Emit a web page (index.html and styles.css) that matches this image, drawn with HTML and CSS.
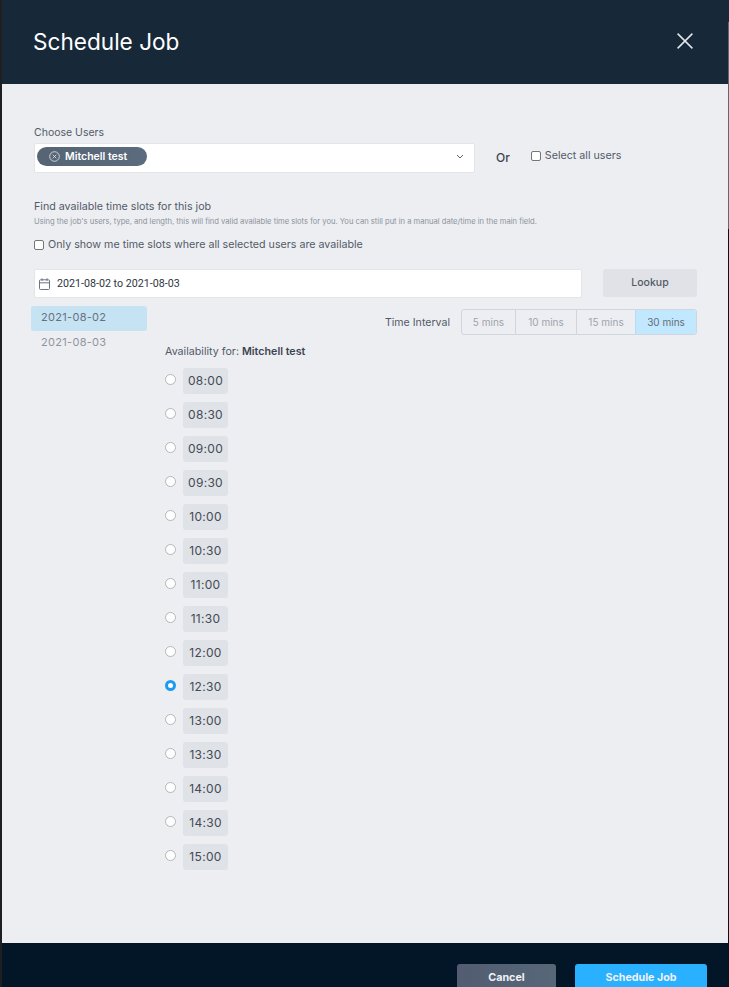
FILE: index.html
```html
<!DOCTYPE html>
<html lang="en">
<head>
<meta charset="utf-8">
<title>Schedule Job</title>
<link rel="stylesheet" href="styles.css">
</head>
<body>
<div class="modal">
  <header class="modal-head">
    <h1 class="modal-title">Schedule Job</h1>
    <svg class="close-icon" width="16" height="16" viewBox="0 0 16 16"><path d="M.6.6l14.8 14.8M15.4.6L.6 15.4" stroke="#e4e7ea" stroke-width="1.5" fill="none"/></svg>
  </header>
  <main class="modal-body">
    <div class="users-label">Choose Users</div>
    <div class="users-row">
      <div class="select">
        <span class="chip">
          <svg class="chip-icon" width="11" height="11" viewBox="0 0 11 11"><circle cx="5.5" cy="5.5" r="4.8" fill="none" stroke="#e8ebee" stroke-width=".8"/><path d="M3.7 3.7l3.6 3.6M7.3 3.7l-3.6 3.6" stroke="#e8ebee" stroke-width=".8"/></svg>
          <span>Mitchell test</span>
        </span>
        <svg class="chevron" width="8" height="5" viewBox="0 0 8 5"><path d="M1 1l3 3 3-3" stroke="#5b6470" stroke-width="1" fill="none"/></svg>
      </div>
      <span class="or">Or</span>
      <label class="check check-all"><span class="box"></span>Select all users</label>
    </div>
    <div class="find-title">Find available time slots for this job</div>
    <div class="find-hint">Using the job's users, type, and length, this will find valid available time slots for you. You can still put in a manual date/time in the main field.</div>
    <label class="check check-only"><span class="box"></span>Only show me time slots where all selected users are available</label>
    <div class="date-row">
      <div class="date-input">
        <svg class="cal-icon" width="11" height="12" viewBox="0 0 11 12"><rect x=".5" y="1.8" width="10" height="9.7" rx="1" fill="none" stroke="#6b7380"/><path d="M.5 4.8h10M3 .3v2.6M8 .3v2.6" stroke="#6b7380" fill="none"/></svg>
        <span>2021-08-02 to 2021-08-03</span>
      </div>
      <button class="lookup">Lookup</button>
    </div>
    <div class="results">
      <div class="dates">
        <div class="date-item date-active">2021-08-02</div>
        <div class="date-item">2021-08-03</div>
      </div>
      <div class="slots-pane">
        <div class="interval">
          <span class="interval-label">Time Interval</span>
          <div class="seg">
            <span class="seg-btn seg-5">5 mins</span>
            <span class="seg-btn seg-10">10 mins</span>
            <span class="seg-btn seg-15">15 mins</span>
            <span class="seg-btn seg-30 seg-on">30 mins</span>
          </div>
        </div>
        <div class="avail">Availability for: <b>Mitchell test</b></div>
        <div class="slots">
          <div class="slot"><span class="radio"></span><span class="time">08:00</span></div>
          <div class="slot"><span class="radio"></span><span class="time">08:30</span></div>
          <div class="slot"><span class="radio"></span><span class="time">09:00</span></div>
          <div class="slot"><span class="radio"></span><span class="time">09:30</span></div>
          <div class="slot"><span class="radio"></span><span class="time">10:00</span></div>
          <div class="slot"><span class="radio"></span><span class="time">10:30</span></div>
          <div class="slot"><span class="radio"></span><span class="time">11:00</span></div>
          <div class="slot"><span class="radio"></span><span class="time">11:30</span></div>
          <div class="slot"><span class="radio"></span><span class="time">12:00</span></div>
          <div class="slot"><span class="radio radio-on"></span><span class="time">12:30</span></div>
          <div class="slot"><span class="radio"></span><span class="time">13:00</span></div>
          <div class="slot"><span class="radio"></span><span class="time">13:30</span></div>
          <div class="slot"><span class="radio"></span><span class="time">14:00</span></div>
          <div class="slot"><span class="radio"></span><span class="time">14:30</span></div>
          <div class="slot"><span class="radio"></span><span class="time">15:00</span></div>
        </div>
      </div>
    </div>
  </main>
  <footer class="modal-foot">
    <button class="btn btn-cancel">Cancel</button>
    <button class="btn btn-primary">Schedule Job</button>
  </footer>
</div>
</body>
</html>
```

FILE: styles.css
```css
* { box-sizing: border-box; }
html, body { margin: 0; height: 987px; overflow: hidden; }
body { position: relative; background: #1d1f23; font-family: Inter, "Liberation Sans", sans-serif; color: #535a67; }
body::after { content: ""; position: absolute; top: 0; right: 0; width: 1px; height: 987px; background: linear-gradient(#172839 22px, #62686c 22px, #62686c 229px, #101114 229px); }
.modal { margin-left: 2px; width: 726px; height: 987px; display: flex; flex-direction: column; background: #eceef2; }
.modal-head { height: 84px; flex: none; background: #172839; display: flex; align-items: center; justify-content: space-between; padding: 0 35px 2px 31px; }
.modal-title { margin: 0; font-size: 22.6px; font-weight: 400; color: #fff; }
.close-icon { display: block; }
.modal-body { flex: 1; padding: 42px 31px 0 32px; min-height: 0; }
.users-label { font-size: 10.5px; line-height: 14px; }
.users-row { display: flex; align-items: center; margin-top: 3px; height: 30px; }
.select { width: 441px; height: 30px; flex: none; background: #fff; border: 1px solid #e3e5e9; border-radius: 2px; display: flex; align-items: center; justify-content: space-between; padding: 0 10px 3px 2px; }
.chip { width: 110px; height: 19px; border-radius: 10px; background: linear-gradient(90deg, #566474, #5b6c7e); color: #fff; font-size: 10.5px; font-weight: 600; display: flex; align-items: center; gap: 5px; padding: 0 0 1px 12px; }
.chip-icon, .chevron, .cal-icon { display: block; flex: none; }
.or { font-size: 12px; font-weight: 500; color: #3d4450; margin: -2px 0 0 21px; }
.check { display: flex; align-items: center; gap: 4px; font-size: 10.7px; }
.check-all { margin-left: 21px; margin-top: -5px; }
.box { width: 10px; height: 10px; flex: none; background: #fff; border: 1px solid #767676; border-radius: 2px; }
.find-title { margin-top: 27px; font-size: 10.7px; line-height: 14px; }
.find-hint { margin-top: 3px; font-size: 7.6px; line-height: 10px; color: #8d929b; white-space: nowrap; }
.check-only { margin-top: 11px; line-height: 14px; }
.date-row { margin-top: 17px; display: flex; align-items: flex-start; gap: 21px; }
.date-input { width: 548px; height: 29px; background: #fff; border: 1px solid #e3e5e9; border-radius: 2px; display: flex; align-items: center; gap: 7px; padding-left: 4px; font-family: Roboto, sans-serif; font-size: 10.7px; color: #2f3540; }
.lookup { width: 94px; height: 28px; border: 0; border-radius: 3px; padding: 0 0 2px; background: #e0e2e7; color: #535a67; font: 500 10.5px Inter, sans-serif; }
.results { display: flex; margin-left: -3px; margin-top: 8px; }
.dates { width: 116px; flex: none; }
.date-item { height: 25px; line-height: 23px; padding-left: 10px; font-size: 11px; letter-spacing: .3px; color: #9095a0; border-radius: 3px; }
.date-active { background: #c6e3f4; color: #667180; }
.slots-pane { flex: 1; padding-left: 18px; }
.interval { display: flex; align-items: center; justify-content: flex-end; gap: 11px; height: 26px; margin-top: 3px; }
.interval-label { font-size: 10.6px; }
.seg { display: flex; height: 26px; border: 1px solid #cfd6dd; border-radius: 3px; overflow: hidden; }
.seg-btn { display: flex; align-items: center; justify-content: center; padding-bottom: 1px; font-size: 10px; color: #9ea3ab; border-left: 1px solid #cfd6dd; }
.seg-btn:first-child { border-left: 0; }
.seg-5 { width: 53px; }
.seg-10 { width: 61px; }
.seg-15 { width: 59px; }
.seg-30 { width: 61px; }
.seg-on { background: #c2e8ff; color: #646c78; border-left-color: #b4dcf4; }
.avail { margin-top: 10px; font-size: 10.7px; line-height: 14px; }
.avail b { color: #3d4450; font-weight: 600; }
.slots { margin-top: 9px; display: flex; flex-direction: column; gap: 8px; }
.slot { display: flex; gap: 7px; height: 26px; }
.radio { width: 11px; height: 11px; flex: none; margin-top: 6px; border-radius: 50%; background: #fff; border: 1px solid #b3b6ba; }
.radio-on { background: #fff; border: 3px solid #1e9bf0; }
.time { width: 45px; height: 26px; border-radius: 3px; background: #dfe2e6; display: flex; align-items: center; justify-content: center; padding-bottom: 1px; font-size: 12px; letter-spacing: .3px; color: #434a55; }
.modal-foot { height: 44px; flex: none; background: #021628; display: flex; justify-content: flex-end; gap: 19px; padding: 21px 21px 0 0; }
.btn { height: 23px; border: 0; border-radius: 3px 3px 0 0; color: #f0f2f5; font: 700 10.7px Inter, sans-serif; padding: 4px 0 0; }
.btn-cancel { width: 99px; background: linear-gradient(90deg, #535c72, #566778); }
.btn-primary { width: 132px; background: #29b0ff; }
```
